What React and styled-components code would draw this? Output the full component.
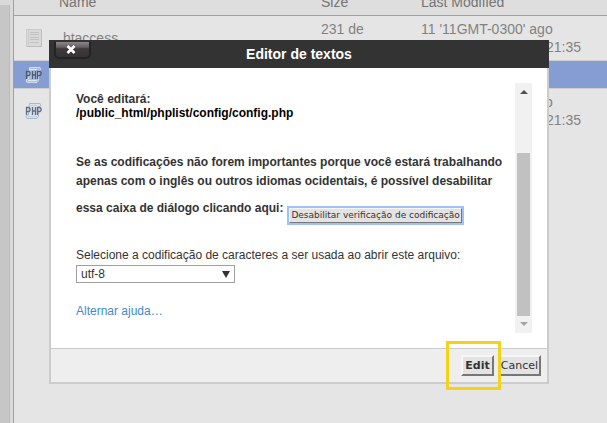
import styled, { createGlobalStyle } from 'styled-components';

const GlobalStyle = createGlobalStyle`
  * {
    box-sizing: border-box;
  }
  body {
    margin: 0;
    overflow: hidden;
    background: #e5e5e5;
    font-family: "Liberation Sans", Arial, sans-serif;
  }
`;

/* file manager behind the dialog */
const Page = styled.div`
  display: flex;
  height: 100vh;
  overflow: hidden;
`;
const TreePane = styled.aside`
  flex: 0 0 14px;
  padding-top: 5px;
  display: flex;
  background: #dadada;
  border-right: 1px solid #a0a0a0;
`;
const TreeScroll = styled.div`
  flex: 0 0 10px;
  background: #c6c6c6;
  border-right: 1px solid #bcbcbc;
`;
const FilePane = styled.main`
  flex: 1;
  min-width: 0;
`;
const FileTable = styled.table`
  width: 100%;
  table-layout: fixed;
  border-collapse: separate;
  border-spacing: 0;
  color: #828282;
  font-size: 14px;
  line-height: 18px;
`;
const HeadCell = styled.th`
  width: ${(props) => props.$width || 'auto'};
  height: 16px;
  padding: 0 0 11px 4px;
  background: #dedede;
  border-bottom: 1px solid #a0a0a0;
  color: #747474;
  font-weight: normal;
  line-height: 4px;
  text-align: left;
  vertical-align: bottom;
`;
const FileRow = styled.tr`
  height: ${(props) => (props.$selected ? '28px' : '45px')};
  background: ${(props) => (props.$selected ? '#869dd3' : '#e5e5e5')};
  td {
    border-bottom: 1px solid ${(props) => (props.$last ? '#e5e5e5' : '#cfcfcf')};
  }
`;
const Cell = styled.td`
  padding: 4px;
  white-space: pre-line;
  vertical-align: ${(props) => (props.$top ? 'top' : 'middle')};
`;
const IconCell = styled.td`
  padding: 0 0 0 11px;
  svg {
    display: block;
  }
`;

/* dialog */
const Overlay = styled.div`
  position: fixed;
  inset: 0;
  padding: 40px 58px 0 49px;
`;
const Dialog = styled.section`
  color: #333;
  font-size: 12px;
  line-height: 14px;
`;
const TitleBar = styled.header`
  display: grid;
  grid-template-columns: 46px 1fr 46px;
  align-items: start;
  height: 28px;
  background: #333;
`;
const Title = styled.h1`
  margin: 0;
  color: #fff;
  font-size: 14px;
  line-height: 28px;
  text-align: center;
`;
const CloseButton = styled.button`
  display: flex;
  align-items: center;
  justify-content: center;
  width: 37px;
  height: 17px;
  margin: 2px 0 0 5px;
  padding: 0 3px 0 0;
  border: 2px solid #222526;
  border-top: 0;
  border-radius: 0 0 5px 5px;
  background: linear-gradient(#8d878a, #625d5f 35%, #3d3a3b 45%, #353233);
`;
const Body = styled.div`
  display: flex;
  padding: 15px;
  background: #fff;
  border: 2px solid #ccc;
  border-width: 0 2px;
`;
const Content = styled.div`
  flex: 1;
  min-width: 0;
  padding: 9px 0 15px 10px;
`;
const FilePath = styled.p`
  margin: 0 0 33px;
  font-weight: bold;
`;
const Path = styled.span`
  display: block;
  color: #000;
`;
const Notice = styled.p`
  margin: 0 0 24px;
  font-weight: bold;
  line-height: 19px;
`;
const NoticeAction = styled.span`
  display: flex;
  align-items: flex-start;
  gap: 5px;
  padding-top: 8px;
`;
const BevelButton = styled.button`
  padding: ${(props) => (props.$bold ? '3px 2px' : '3px 1px')};
  border: 2px solid;
  border-color: #f6f6f6 #777 #777 #f6f6f6;
  background: #e3e3e3;
  color: #333;
  font-family: "DejaVu Sans", Verdana, sans-serif;
  font-size: 11px;
  font-weight: ${(props) => (props.$bold ? 'bold' : 'normal')};
  line-height: 11px;
  white-space: nowrap;
`;
const FocusedButton = styled(BevelButton)`
  margin-top: 8px;
  padding: 1px;
  font-size: 9px;
  outline: 2px solid #9fc0fa;
  outline-offset: -1px;
`;
const Field = styled.label`
  display: block;
  margin-bottom: 3px;
`;
const SelectBox = styled.div`
  position: relative;
  width: 159px;
  margin-bottom: 21px;
  &::after {
    content: '';
    position: absolute;
    top: 6px;
    right: 5px;
    border: 4px solid transparent;
    border-top: 7px solid #333;
    border-bottom: 0;
    pointer-events: none;
  }
`;
const Select = styled.select`
  display: block;
  width: 100%;
  height: 18px;
  padding: 0 4px;
  appearance: none;
  border: 1px solid #a0a0a0;
  border-radius: 0;
  background: #fff;
  color: #333;
  font: 12px/16px "Liberation Sans", Arial, sans-serif;
`;
const HelpLink = styled.a`
  color: #428bca;
  text-decoration: none;
`;
const ScrollTrack = styled.div`
  flex: 0 0 17px;
  display: flex;
  flex-direction: column;
  align-items: center;
  padding: 7px 0;
  background: #f1f1f1;
`;
const Thumb = styled.div`
  width: 13px;
  height: 163px;
  margin: auto 0 6px;
  background: #c1c1c1;
`;
const Footer = styled.footer`
  display: flex;
  justify-content: flex-end;
  gap: 4px;
  padding: 6px;
  background: #eee;
  border: 2px solid #ccc;
  border-top-width: 1px;
`;
const Highlight = styled.div`
  position: relative;
  display: flex;
  &::after {
    content: '';
    position: absolute;
    inset: -14px -7px -14px -15px;
    border: 3px solid #f4d216;
    pointer-events: none;
  }
`;

const TextIcon = () => (
  <svg width="18" height="18" viewBox="0 0 18 18" fill="none">
    <rect x="1.5" y="0.5" width="15" height="17" fill="#d9d9d9" stroke="#cbcbcb" />
    <path d="M16.5 1v16.5H2" stroke="#bdbdbd" />
    <path d="M3.500 2v14" stroke="#cdcdcd" />
    <path
      d="M5 3.5h9M5 5.5h9M5 8.500h9M5 10.500h9M5 13.500h9"
      stroke="#c2c2c2"
    />
  </svg>
);

const PhpIcon = ({ selected }) => (
  <svg width="17" height="18" viewBox="0 0 17 18" fill="none">
    <path
      d="M4.500 1.500H15l1 1.500-1 1.500h-1l-.500 10-1.500 2H2L1 15l1-2h1.500z"
      fill={selected ? '#a9bedf' : '#dce2e8'}
      stroke={selected ? '#cfdcec' : '#a3bbd0'}
    />
    <path d="M4 3.500h8M3 14.500h9" stroke={selected ? '#dde8f0' : '#c3d2de'} />
    <path
      d="M1.500 13V5.500H4L5 6.500V8.500L4 9.500H1.500M7.500 5v8M10.500 5v8M7.500 9h3M12.500 13V5.500H15l1 1v2l-1 1h-2.500"
      stroke={selected ? '#505b78' : '#626c83'}
      strokeWidth="1.300"
    />
  </svg>
);

const Arrow = ({ up }) => (
  <svg width="8" height="4" viewBox="0 0 8 4">
    <path d={up ? 'M0 4 4 0 8 4z' : 'M0 0h8L4 4z'} fill={up ? '#505050' : '#a3a3a3'} />
  </svg>
);

const modified = "11 '11GMT-0300' ago\n'11GMT-0300' 2017 21:35";

function FileList() {
  return (
    <FileTable>
      <thead>
        <tr>
          <HeadCell $width="41px" aria-label="Type" />
          <HeadCell>Name</HeadCell>
          <HeadCell $width="100px">Size</HeadCell>
          <HeadCell $width="190px">Last Modified</HeadCell>
        </tr>
      </thead>
      <tbody>
        <FileRow>
          <IconCell><TextIcon /></IconCell>
          <Cell>.htaccess</Cell>
          <Cell $top>231 de</Cell>
          <Cell>{modified}</Cell>
        </FileRow>
        <FileRow $selected>
          <IconCell><PhpIcon selected /></IconCell>
          <Cell />
          <Cell />
          <Cell />
        </FileRow>
        <FileRow $last>
          <IconCell><PhpIcon /></IconCell>
          <Cell />
          <Cell />
          <Cell>{modified}</Cell>
        </FileRow>
      </tbody>
    </FileTable>
  );
}

function EditorDialog() {
  return (
    <Dialog role="dialog" aria-labelledby="dialogTitle">
      <TitleBar>
        <CloseButton type="button" aria-label="Fechar">
          <svg width="10" height="9" viewBox="0 0 10 9">
            <path d="M1.500 1 8.500 8M8.500 1 1.500 8" stroke="#fff" strokeWidth="2.600" />
          </svg>
        </CloseButton>
        <Title id="dialogTitle">Editor de textos</Title>
      </TitleBar>
      <Body>
        <Content>
          <FilePath>
            Você editará:
            <Path>/public_html/phplist/config/config.php</Path>
          </FilePath>
          <Notice>
            Se as codificações não forem importantes porque você estará trabalhando
            apenas com o inglês ou outros idiomas ocidentais, é possível desabilitar
            <NoticeAction>
              essa caixa de diálogo clicando aqui:
              <FocusedButton type="button">Desabilitar verificação de codificação</FocusedButton>
            </NoticeAction>
          </Notice>
          <Field htmlFor="charset">
            Selecione a codificação de caracteres a ser usada ao abrir este arquivo:
          </Field>
          <SelectBox>
            <Select id="charset" defaultValue="utf-8">
              <option value="utf-8">utf-8</option>
            </Select>
          </SelectBox>
          <HelpLink href="#ajuda">Alternar ajuda…</HelpLink>
        </Content>
        <ScrollTrack>
          <Arrow up />
          <Thumb />
          <Arrow />
        </ScrollTrack>
      </Body>
      <Footer>
        <Highlight>
          <BevelButton type="button" $bold>Edit</BevelButton>
        </Highlight>
        <BevelButton type="button">Cancel</BevelButton>
      </Footer>
    </Dialog>
  );
}

function App() {
  return (
    <>
      <GlobalStyle />
      <Page>
        <TreePane>
          <TreeScroll />
        </TreePane>
        <FilePane>
          <FileList />
        </FilePane>
      </Page>
      <Overlay>
        <EditorDialog />
      </Overlay>
    </>
  );
}

export default App;
